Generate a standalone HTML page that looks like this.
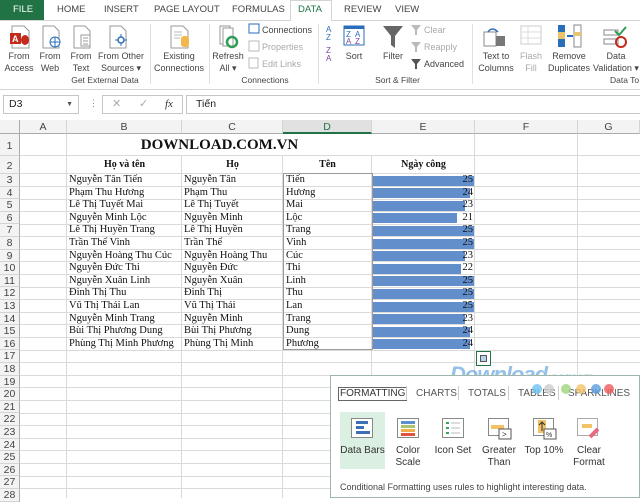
<!DOCTYPE html>
<html><head><meta charset="utf-8"><style>
*{margin:0;padding:0;box-sizing:border-box}
body{width:640px;height:498px;overflow:hidden;background:#fff;font-family:"Liberation Sans",sans-serif;position:relative;font-size:10px;color:#444}
.a{position:absolute}
.tab{position:absolute;top:0;height:20px;line-height:20px;font-size:9.5px;color:#444}
.rb{position:absolute;top:20px;left:0;width:640px;height:70px;background:#fff;border-bottom:1px solid #d4d4d4;border-top:1px solid #d4d4d4}
.lbl{position:absolute;text-align:center;font-size:9px;color:#444;line-height:12px;white-space:nowrap}
.grp{position:absolute;top:75px;font-size:8.5px;color:#444;text-align:center;white-space:nowrap}
.sm{position:absolute;font-size:9px;color:#444;line-height:12px;white-space:nowrap}
.dis{color:#aaa}
.ico{position:absolute}
.ch{position:absolute;top:120px;height:14px;background:#f3f3f3;border-right:1px solid #d4d4d4;border-bottom:1px solid #ababab;text-align:center;font-size:10.5px;line-height:14px;color:#444}
.rh{position:absolute;left:0;width:20px;background:#f3f3f3;border-bottom:1px solid #d4d4d4;border-right:1px solid #ababab;text-align:center;font-size:10.5px;color:#444}
.vl{position:absolute;top:134px;width:1px;height:364px;background:#dadada}
.hl{position:absolute;left:20px;width:620px;height:1px;background:#dadada}
.c{position:absolute;font-family:"Liberation Serif",serif;font-size:10.5px;color:#111;white-space:nowrap;line-height:12px}
.bar{position:absolute;left:373px;height:10px;background:#628ecb}
.num{position:absolute;left:440px;width:33px;text-align:right;font-family:"Liberation Serif",serif;font-size:10.5px;color:#111;line-height:12px}
</style></head><body>
<!-- tabs -->
<div class="a" style="left:0;top:0;width:44px;height:20px;background:#217346"></div>
<div class="tab" style="left:13px;color:#fff">FILE</div>
<div class="tab" style="left:57px">HOME</div>
<div class="tab" style="left:104px">INSERT</div>
<div class="tab" style="left:154px">PAGE LAYOUT</div>
<div class="tab" style="left:232px">FORMULAS</div>
<div class="a" style="left:290px;top:0;width:42px;height:21px;background:#fff;border:1px solid #d4d4d4;border-bottom:none;z-index:2"></div>
<div class="tab" style="left:298px;color:#217346;z-index:3">DATA</div>
<div class="tab" style="left:344px">REVIEW</div>
<div class="tab" style="left:395px">VIEW</div>
<div class="rb"></div>
<!-- ribbon icons -->
<svg class="ico" style="left:8px;top:24px" width="24" height="26"><path d="M4 2h12l5 5v17H4z" fill="#fff" stroke="#999"/><rect x="2" y="9" width="11" height="11" fill="#c42b1c"/><text x="4" y="18" font-size="9" fill="#fff" font-family="Liberation Sans" font-weight="bold">A</text><ellipse cx="17" cy="16" rx="4" ry="5" fill="#c42b1c"/></svg>
<svg class="ico" style="left:40px;top:24px" width="24" height="26"><path d="M3 2h11l5 5v17H3z" fill="#fff" stroke="#999"/><circle cx="15" cy="18" r="5" fill="#fff" stroke="#2a6ebb"/><path d="M10 18h10M15 13v10" stroke="#2a6ebb"/></svg>
<svg class="ico" style="left:71px;top:24px" width="24" height="26"><path d="M3 2h11l5 5v17H3z" fill="#fff" stroke="#999"/><rect x="10" y="11" width="9" height="11" fill="#fff" stroke="#999"/><path d="M12 14h5M12 17h5M12 20h5" stroke="#999"/></svg>
<svg class="ico" style="left:107px;top:24px" width="24" height="26"><path d="M3 2h11l5 5v17H3z" fill="#fff" stroke="#999"/><circle cx="14" cy="16" r="3" fill="none" stroke="#2a6ebb" stroke-width="1.5"/><path d="M14 10v3M14 19v3M8 16h3M17 16h3" stroke="#2a6ebb"/></svg>
<div class="lbl" style="left:3px;top:50px;width:32px">From<br>Access</div>
<div class="lbl" style="left:35px;top:50px;width:30px">From<br>Web</div>
<div class="lbl" style="left:66px;top:50px;width:30px">From<br>Text</div>
<div class="lbl" style="left:96px;top:50px;width:50px">From Other<br>Sources ▾</div>
<div class="grp" style="left:60px;width:90px">Get External Data</div>
<div class="a" style="left:150px;top:24px;width:1px;height:60px;background:#e1e1e1"></div>
<svg class="ico" style="left:168px;top:24px" width="24" height="26"><path d="M3 2h12l5 5v17H3z" fill="#fff" stroke="#999"/><path d="M6 8h8M6 11h8M6 14h6" stroke="#bbb"/><rect x="13" y="12" width="8" height="11" rx="3" fill="#f2b84b"/></svg>
<div class="lbl" style="left:152px;top:50px;width:54px">Existing<br>Connections</div>
<div class="a" style="left:209px;top:24px;width:1px;height:60px;background:#e1e1e1"></div>
<svg class="ico" style="left:217px;top:24px" width="26" height="26"><path d="M3 2h10v18H3z" fill="#fff" stroke="#999"/><path d="M6 4h10v18H6z" fill="#fff" stroke="#999"/><circle cx="15" cy="18" r="5" fill="none" stroke="#2e9e57" stroke-width="2.5"/></svg>
<div class="lbl" style="left:211px;top:50px;width:34px">Refresh<br>All ▾</div>
<svg class="ico" style="left:248px;top:23px" width="12" height="12"><rect x="1" y="1" width="10" height="9" fill="#fff" stroke="#2a6ebb"/></svg>
<div class="sm" style="left:262px;top:24px">Connections</div>
<svg class="ico" style="left:248px;top:40px" width="12" height="12"><rect x="1" y="1" width="10" height="10" fill="#fff" stroke="#bbb"/></svg>
<div class="sm dis" style="left:262px;top:41px">Properties</div>
<svg class="ico" style="left:248px;top:57px" width="12" height="12"><rect x="1" y="1" width="9" height="10" fill="#fff" stroke="#bbb"/></svg>
<div class="sm dis" style="left:262px;top:58px">Edit Links</div>
<div class="grp" style="left:235px;width:60px">Connections</div>
<div class="a" style="left:318px;top:24px;width:1px;height:60px;background:#e1e1e1"></div>
<div class="sm" style="left:326px;top:26px;font-size:8px;color:#2a6ebb;line-height:8px">A<br>Z</div>
<div class="sm" style="left:326px;top:47px;font-size:8px;color:#7b3fa0;line-height:8px">Z<br>A</div>
<svg class="ico" style="left:343px;top:24px" width="22" height="22"><rect x="1" y="2" width="20" height="19" fill="#fff" stroke="#2a6ebb"/><rect x="1" y="2" width="20" height="3" fill="#2a6ebb"/><text x="3" y="13" font-size="8" fill="#2a6ebb">Z</text><text x="12" y="13" font-size="8" fill="#2a6ebb">A</text><text x="3" y="20" font-size="8" fill="#7b3fa0">A</text><text x="12" y="20" font-size="8" fill="#7b3fa0">Z</text></svg>
<div class="lbl" style="left:342px;top:50px;width:24px">Sort</div>
<svg class="ico" style="left:382px;top:25px" width="22" height="24"><path d="M1 1h20l-8 10v12l-4-3V11z" fill="#666"/></svg>
<div class="lbl" style="left:379px;top:50px;width:28px">Filter</div>
<div class="sm dis" style="left:424px;top:24px">Clear</div>
<div class="sm dis" style="left:424px;top:41px">Reapply</div>
<div class="sm" style="left:424px;top:58px">Advanced</div>
<svg class="ico" style="left:410px;top:24px" width="12" height="46"><path d="M1 1h10l-4 5v5H5V6z" fill="#bbb"/><path d="M1 18h10l-4 5v5H5v-5z" fill="#bbb"/><path d="M1 35h10l-4 5v5H5v-5z" fill="#555"/></svg>
<div class="grp" style="left:365px;width:65px">Sort &amp; Filter</div>
<div class="a" style="left:472px;top:24px;width:1px;height:60px;background:#e1e1e1"></div>
<svg class="ico" style="left:482px;top:26px" width="24" height="22"><rect x="2" y="6" width="12" height="14" fill="#fff" stroke="#888"/><rect x="14" y="10" width="9" height="10" fill="#777"/><path d="M6 6q4-6 10 0" fill="none" stroke="#2a6ebb" stroke-width="1.5"/></svg>
<div class="lbl" style="left:474px;top:50px;width:44px">Text to<br>Columns</div>
<svg class="ico" style="left:520px;top:25px" width="22" height="22"><rect x="1" y="1" width="20" height="18" fill="#fff" stroke="#ccc"/><path d="M1 7h20M1 13h20M8 1v18" stroke="#ddd"/></svg>
<div class="lbl dis" style="left:516px;top:50px;width:30px">Flash<br>Fill</div>
<svg class="ico" style="left:557px;top:24px" width="26" height="24"><rect x="1" y="1" width="7" height="22" fill="#2a6ebb"/><rect x="1" y="8" width="7" height="7" fill="#e9c46a"/><rect x="17" y="1" width="7" height="22" fill="#fff" stroke="#888"/><rect x="17" y="8" width="7" height="4" fill="#e9c46a"/><path d="M10 12h6" stroke="#2a6ebb" stroke-width="2"/></svg>
<div class="lbl" style="left:546px;top:50px;width:46px">Remove<br>Duplicates</div>
<svg class="ico" style="left:603px;top:26px" width="24" height="22"><rect x="1" y="4" width="14" height="5" fill="#fff" stroke="#888"/><rect x="1" y="13" width="14" height="5" fill="#fff" stroke="#888"/><path d="M12 5l4 4 7-8" fill="none" stroke="#2e9e57" stroke-width="2"/><circle cx="18" cy="16" r="5" fill="none" stroke="#c42b1c" stroke-width="2"/></svg>
<div class="lbl" style="left:592px;top:50px;width:48px">Data<br>Validation ▾</div>
<div class="grp" style="left:610px;width:40px;text-align:left">Data To</div>
<!-- formula bar -->
<div class="a" style="left:0;top:91px;width:640px;height:27px;background:#fff"></div>
<div class="a" style="left:3px;top:95px;width:76px;height:19px;border:1px solid #c6c6c6;font-size:10.5px;line-height:17px;padding-left:5px;color:#222">D3<span style="position:absolute;right:5px;font-size:7px;color:#555">▼</span></div>
<div class="a" style="left:89px;top:98px;font-size:9px;color:#888">⋮</div>
<div class="a" style="left:102px;top:95px;width:81px;height:19px;border:1px solid #c6c6c6;font-size:11px;line-height:17px;color:#aaa"><span style="position:absolute;left:9px">✕</span><span style="position:absolute;left:36px">✓</span><span style="position:absolute;left:62px;color:#333;font-family:'Liberation Serif',serif;font-style:italic">fx</span></div>
<div class="a" style="left:186px;top:95px;width:454px;height:19px;border:1px solid #c6c6c6;border-right:none;font-size:10.5px;line-height:17px;padding-left:9px;color:#222">Tiến</div>
<!-- column headers -->
<div class="a" style="left:0;top:120px;width:20px;height:14px;background:#f3f3f3;border-right:1px solid #ababab;border-bottom:1px solid #ababab"></div>
<div class="ch" style="left:20px;width:47px">A</div>
<div class="ch" style="left:67px;width:115px">B</div>
<div class="ch" style="left:182px;width:101px">C</div>
<div class="ch" style="left:283px;width:89px;background:#e1e1e1;color:#217346;border-bottom:2px solid #217346">D</div>
<div class="ch" style="left:372px;width:103px">E</div>
<div class="ch" style="left:475px;width:103px">F</div>
<div class="ch" style="left:578px;width:62px">G</div>
<!-- grid lines -->
<div class="vl" style="left:66px"></div><div class="vl" style="left:181px"></div><div class="vl" style="left:282px"></div><div class="vl" style="left:371px"></div><div class="vl" style="left:474px"></div><div class="vl" style="left:577px"></div>
<!-- row headers & lines -->
<div class="rh" style="top:134px;height:22px;line-height:24px">1</div>
<div class="hl" style="top:155px"></div>
<div class="rh" style="top:156px;height:18px;line-height:20px">2</div>
<div class="hl" style="top:173px"></div>
<div class="rh" style="top:174px;height:12.6px;line-height:12px">3</div><div class="hl" style="top:186px"></div>
<div class="rh" style="top:186.6px;height:12.6px;line-height:12px">4</div><div class="hl" style="top:199px"></div>
<div class="rh" style="top:199.2px;height:12.6px;line-height:12px">5</div><div class="hl" style="top:211px"></div>
<div class="rh" style="top:211.8px;height:12.6px;line-height:12px">6</div><div class="hl" style="top:224px"></div>
<div class="rh" style="top:224.4px;height:12.6px;line-height:12px">7</div><div class="hl" style="top:236px"></div>
<div class="rh" style="top:237px;height:12.6px;line-height:12px">8</div><div class="hl" style="top:249px"></div>
<div class="rh" style="top:249.6px;height:12.6px;line-height:12px">9</div><div class="hl" style="top:261px"></div>
<div class="rh" style="top:262.2px;height:12.6px;line-height:12px">10</div><div class="hl" style="top:274px"></div>
<div class="rh" style="top:274.8px;height:12.6px;line-height:12px">11</div><div class="hl" style="top:287px"></div>
<div class="rh" style="top:287.4px;height:12.6px;line-height:12px">12</div><div class="hl" style="top:299px"></div>
<div class="rh" style="top:300px;height:12.6px;line-height:12px">13</div><div class="hl" style="top:312px"></div>
<div class="rh" style="top:312.6px;height:12.6px;line-height:12px">14</div><div class="hl" style="top:324px"></div>
<div class="rh" style="top:325.2px;height:12.6px;line-height:12px">15</div><div class="hl" style="top:337px"></div>
<div class="rh" style="top:337.8px;height:12.6px;line-height:12px">16</div><div class="hl" style="top:350px"></div>
<div class="rh" style="top:350.4px;height:12.6px;line-height:12px">17</div><div class="hl" style="top:362px"></div>
<div class="rh" style="top:363px;height:12.6px;line-height:12px">18</div><div class="hl" style="top:375px"></div>
<div class="rh" style="top:375.6px;height:12.6px;line-height:12px">19</div><div class="hl" style="top:387px"></div>
<div class="rh" style="top:388.2px;height:12.6px;line-height:12px">20</div><div class="hl" style="top:400px"></div>
<div class="rh" style="top:400.8px;height:12.6px;line-height:12px">21</div><div class="hl" style="top:413px"></div>
<div class="rh" style="top:413.4px;height:12.6px;line-height:12px">22</div><div class="hl" style="top:425px"></div>
<div class="rh" style="top:426px;height:12.6px;line-height:12px">23</div><div class="hl" style="top:438px"></div>
<div class="rh" style="top:438.6px;height:12.6px;line-height:12px">24</div><div class="hl" style="top:450px"></div>
<div class="rh" style="top:451.2px;height:12.6px;line-height:12px">25</div><div class="hl" style="top:463px"></div>
<div class="rh" style="top:463.8px;height:12.6px;line-height:12px">26</div><div class="hl" style="top:476px"></div>
<div class="rh" style="top:476.4px;height:12.6px;line-height:12px">27</div><div class="hl" style="top:488px"></div>
<div class="rh" style="top:489px;height:12.6px;line-height:12px">28</div>
<!-- merged title -->
<div class="a" style="left:67px;top:134px;width:305px;height:21px;background:#fff"></div>
<div class="c" style="left:67px;top:137px;width:305px;text-align:center;font-size:15px;font-weight:bold;line-height:16px">DOWNLOAD.COM.VN</div>
<div class="c" style="left:67px;top:159px;width:115px;text-align:center;font-weight:bold;font-size:10px">Họ và tên</div>
<div class="c" style="left:182px;top:159px;width:101px;text-align:center;font-weight:bold;font-size:10px">Họ</div>
<div class="c" style="left:283px;top:159px;width:89px;text-align:center;font-weight:bold;font-size:10px">Tên</div>
<div class="c" style="left:372px;top:159px;width:103px;text-align:center;font-weight:bold;font-size:10px">Ngày công</div>
<!-- selection box on D -->
<div class="a" style="left:283px;top:173px;width:90px;height:177px;border:1px solid #9a9a9a"></div>
<!-- data -->
<div class="c" style="left:69px;top:174px">Nguyễn Tân Tiến</div><div class="c" style="left:184px;top:174px">Nguyễn Tân</div><div class="c" style="left:286px;top:174px">Tiến</div>
<div class="c" style="left:69px;top:186.6px">Phạm Thu Hương</div><div class="c" style="left:184px;top:186.6px">Phạm Thu</div><div class="c" style="left:286px;top:186.6px">Hương</div>
<div class="c" style="left:69px;top:199.2px">Lê Thị Tuyết Mai</div><div class="c" style="left:184px;top:199.2px">Lê Thị Tuyết</div><div class="c" style="left:286px;top:199.2px">Mai</div>
<div class="c" style="left:69px;top:211.8px">Nguyễn Minh Lộc</div><div class="c" style="left:184px;top:211.8px">Nguyễn Minh</div><div class="c" style="left:286px;top:211.8px">Lộc</div>
<div class="c" style="left:69px;top:224.4px">Lê Thị Huyền Trang</div><div class="c" style="left:184px;top:224.4px">Lê Thị Huyền</div><div class="c" style="left:286px;top:224.4px">Trang</div>
<div class="c" style="left:69px;top:237px">Trần Thế Vinh</div><div class="c" style="left:184px;top:237px">Trần Thế</div><div class="c" style="left:286px;top:237px">Vinh</div>
<div class="c" style="left:69px;top:249.6px">Nguyễn Hoàng Thu Cúc</div><div class="c" style="left:184px;top:249.6px">Nguyễn Hoàng Thu</div><div class="c" style="left:286px;top:249.6px">Cúc</div>
<div class="c" style="left:69px;top:262.2px">Nguyễn Đức Thi</div><div class="c" style="left:184px;top:262.2px">Nguyễn Đức</div><div class="c" style="left:286px;top:262.2px">Thi</div>
<div class="c" style="left:69px;top:274.8px">Nguyễn Xuân Linh</div><div class="c" style="left:184px;top:274.8px">Nguyễn Xuân</div><div class="c" style="left:286px;top:274.8px">Linh</div>
<div class="c" style="left:69px;top:287.4px">Đinh Thị Thu</div><div class="c" style="left:184px;top:287.4px">Đinh Thị</div><div class="c" style="left:286px;top:287.4px">Thu</div>
<div class="c" style="left:69px;top:300px">Vũ Thị Thái Lan</div><div class="c" style="left:184px;top:300px">Vũ Thị Thái</div><div class="c" style="left:286px;top:300px">Lan</div>
<div class="c" style="left:69px;top:312.6px">Nguyễn Minh Trang</div><div class="c" style="left:184px;top:312.6px">Nguyễn Minh</div><div class="c" style="left:286px;top:312.6px">Trang</div>
<div class="c" style="left:69px;top:325.2px">Bùi Thị Phương Dung</div><div class="c" style="left:184px;top:325.2px">Bùi Thị Phương</div><div class="c" style="left:286px;top:325.2px">Dung</div>
<div class="c" style="left:69px;top:337.8px">Phùng Thị Minh Phương</div><div class="c" style="left:184px;top:337.8px">Phùng Thị Minh</div><div class="c" style="left:286px;top:337.8px">Phương</div>
<!-- bars -->
<div class="bar" style="top:175.5px;width:101px"></div><div class="num" style="top:174px">25</div>
<div class="bar" style="top:188px;width:97px"></div><div class="num" style="top:186.6px">24</div>
<div class="bar" style="top:200.7px;width:92px"></div><div class="num" style="top:199.2px">23</div>
<div class="bar" style="top:213.3px;width:84px"></div><div class="num" style="top:211.8px">21</div>
<div class="bar" style="top:225.9px;width:101px"></div><div class="num" style="top:224.4px">25</div>
<div class="bar" style="top:238.5px;width:101px"></div><div class="num" style="top:237px">25</div>
<div class="bar" style="top:251px;width:92px"></div><div class="num" style="top:249.6px">23</div>
<div class="bar" style="top:263.7px;width:88px"></div><div class="num" style="top:262.2px">22</div>
<div class="bar" style="top:276.3px;width:101px"></div><div class="num" style="top:274.8px">25</div>
<div class="bar" style="top:288.9px;width:101px"></div><div class="num" style="top:287.4px">25</div>
<div class="bar" style="top:301.5px;width:101px"></div><div class="num" style="top:300px">25</div>
<div class="bar" style="top:314px;width:92px"></div><div class="num" style="top:312.6px">23</div>
<div class="bar" style="top:326.7px;width:97px"></div><div class="num" style="top:325.2px">24</div>
<div class="bar" style="top:339.3px;width:97px"></div><div class="num" style="top:337.8px">24</div>
<!-- quick analysis button -->
<div class="a" style="left:476px;top:351px;width:15px;height:15px;background:#fff;border:1px solid #217346"><div style="position:absolute;left:3px;top:3px;width:7px;height:7px;background:#b7d3ec;border:1px solid #555"></div></div>
<div class="a" style="left:450px;top:362px;font-size:22px;font-weight:bold;font-style:italic;color:#3f8fd6;opacity:.55;letter-spacing:-1px">Download<span style="font-size:14px">.com.vn</span></div>
<!-- panel -->
<div class="a" style="left:330px;top:375px;width:310px;height:123px;background:#fff;border:1px solid #9fb7a8"></div>
<div class="a" style="left:338px;top:387px;font-size:10px;color:#333;border:1px solid #666;padding:0 1px;line-height:12px">FORMATTING</div>
<div class="a" style="left:406px;top:386px;width:1px;height:14px;background:#ccc"></div>
<div class="a" style="left:416px;top:388px;font-size:10px;color:#555">CHARTS</div>
<div class="a" style="left:458px;top:386px;width:1px;height:14px;background:#ccc"></div>
<div class="a" style="left:468px;top:388px;font-size:10px;color:#555">TOTALS</div>
<div class="a" style="left:508px;top:386px;width:1px;height:14px;background:#ccc"></div>
<div class="a" style="left:518px;top:388px;font-size:10px;color:#555">TABLES</div>
<div class="a" style="left:558px;top:386px;width:1px;height:14px;background:#ccc"></div>
<div class="a" style="left:568px;top:388px;font-size:10px;color:#555">SPARKLINES</div>
<svg class="a" style="left:528px;top:383px" width="100" height="12"><circle cx="9" cy="6" r="5" fill="#6cc3f2" opacity=".8"/><circle cx="21" cy="6" r="5" fill="#ccc" opacity=".8"/><circle cx="38" cy="6" r="5" fill="#9fd47c" opacity=".8"/><circle cx="53" cy="6" r="5" fill="#f5c36b" opacity=".8"/><circle cx="68" cy="6" r="5" fill="#5b9de0" opacity=".8"/><circle cx="81" cy="6" r="5" fill="#f05a5a" opacity=".8"/></svg>
<div class="a" style="left:340px;top:412px;width:45px;height:57px;background:#dcefe3"></div>
<svg class="a" style="left:351px;top:418px" width="22" height="20"><rect x="0.5" y="0.5" width="21" height="19" fill="#fff" stroke="#888"/><rect x="5" y="3" width="12" height="3" fill="#3c6fb5"/><rect x="5" y="8" width="8" height="3" fill="#3c6fb5"/><rect x="5" y="13" width="14" height="3" fill="#3c6fb5"/></svg>
<svg class="a" style="left:397px;top:418px" width="22" height="20"><rect x="0.5" y="0.5" width="21" height="19" fill="#fff" stroke="#888"/><rect x="4" y="3" width="14" height="3" fill="#5b8fd0"/><rect x="4" y="7" width="14" height="3" fill="#a8c472"/><rect x="4" y="11" width="14" height="3" fill="#f3b04a"/><rect x="4" y="15" width="14" height="3" fill="#e0533c"/></svg>
<svg class="a" style="left:442px;top:418px" width="22" height="20"><rect x="0.5" y="0.5" width="21" height="19" fill="#fff" stroke="#888"/><path d="M4 5h3M4 10h3M4 15h3" stroke="#3aa05a" stroke-width="2"/><path d="M9 5h9M9 10h9M9 15h9" stroke="#bbb"/></svg>
<svg class="a" style="left:488px;top:418px" width="24" height="22"><rect x="0.5" y="0.5" width="20" height="17" fill="#fff" stroke="#888"/><rect x="3" y="7" width="13" height="4" fill="#f3c267"/><rect x="11" y="11" width="12" height="10" fill="#fff" stroke="#555"/><text x="14" y="19" font-size="8" fill="#333">&gt;</text></svg>
<svg class="a" style="left:533px;top:418px" width="24" height="22"><rect x="0.5" y="0.5" width="20" height="17" fill="#fff" stroke="#888"/><rect x="5" y="2" width="8" height="13" fill="#f3c267"/><path d="M9 4v9M6 7l3-3 3 3" stroke="#333" fill="none"/><rect x="11" y="11" width="12" height="10" fill="#fff" stroke="#555"/><text x="13" y="19" font-size="7" fill="#333">%</text></svg>
<svg class="a" style="left:577px;top:418px" width="24" height="22"><rect x="0.5" y="0.5" width="20" height="17" fill="#fff" stroke="#aaa"/><rect x="5" y="6" width="10" height="4" fill="#f3c267"/><path d="M13 19l8-8" stroke="#e86a7e" stroke-width="4"/></svg>
<div class="a" style="left:340px;top:445px;width:45px;text-align:center;font-size:10px;color:#333">Data Bars</div>
<div class="a" style="left:388px;top:445px;width:40px;text-align:center;font-size:10px;color:#333;line-height:12px">Color<br>Scale</div>
<div class="a" style="left:432px;top:445px;width:42px;text-align:center;font-size:10px;color:#333">Icon Set</div>
<div class="a" style="left:478px;top:445px;width:42px;text-align:center;font-size:10px;color:#333;line-height:12px">Greater<br>Than</div>
<div class="a" style="left:522px;top:445px;width:44px;text-align:center;font-size:10px;color:#333">Top 10%</div>
<div class="a" style="left:568px;top:445px;width:42px;text-align:center;font-size:10px;color:#333;line-height:12px">Clear<br>Format</div>
<div class="a" style="left:340px;top:482px;font-size:9px;color:#444">Conditional Formatting uses rules to highlight interesting data.</div>
</body></html>
